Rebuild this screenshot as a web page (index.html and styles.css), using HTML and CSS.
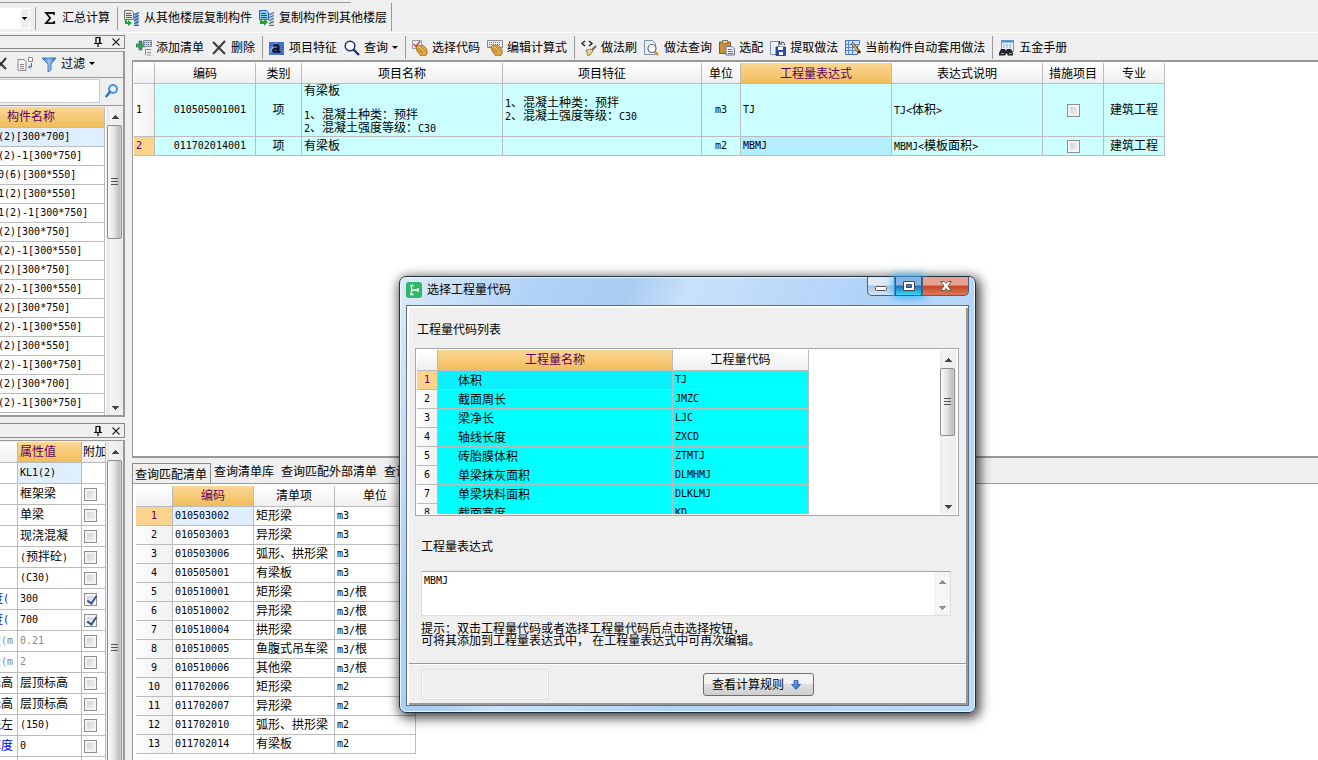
FILE: index.html
```html
<!DOCTYPE html>
<html lang="zh-CN">
<head>
<meta charset="utf-8">
<title>选择工程量代码</title>
<link rel="stylesheet" href="styles.css">
</head>
<body>
<svg class="defs" width="0" height="0" aria-hidden="true">
  <defs>
    <linearGradient id="gFunnel" x1="0" y1="0" x2="1" y2="0"><stop offset="0" stop-color="#2f6fc4"/><stop offset=".5" stop-color="#9cc8f4"/><stop offset="1" stop-color="#2a5fb0"/></linearGradient>
    <linearGradient id="gArrow" x1="0" y1="0" x2="1" y2="1"><stop offset="0" stop-color="#8fc2f7"/><stop offset="1" stop-color="#1d4fae"/></linearGradient>
  </defs>
  <symbol id="i-pin" viewBox="0 0 10 10"><path d="M2.500 .5h5M3 1v5M6.500 1v5M7 1v5M1 6.500h8M5 7v3" fill="none" stroke="#000" stroke-width="1.200"/></symbol>
  <symbol id="i-x" viewBox="0 0 10 10"><path d="M1.500 1.500l7 7M8.500 1.500l-7 7" stroke="#222" stroke-width="1.100"/></symbol>
  <symbol id="i-hand" viewBox="0 0 16 16"><path d="M4 7l2-2 2 1 2-1 3 2 2 3v4l-2 2h-4L5 11z" fill="#e0aa45" stroke="#8a5a16" stroke-width=".8"/><path d="M7 8l4 4M9 7l4 4M6 9.500l4 4" stroke="#a26b1e" stroke-width=".8"/><path d="M7 7l5 4" stroke="#f8dc94" stroke-width=".8"/></symbol>
</svg>

<header class="appbar">
  <div class="appbar-in">
    <select class="combo" aria-label="楼层"><option></option></select>
    <i class="sep"></i>
    <button class="tool"><svg viewBox="0 0 16 16"><path d="M12 5V3H4l4.200 5L4 13.200h8.200V11" fill="none" stroke="#111" stroke-width="1.800"/></svg>汇总计算</button>
    <i class="sep"></i>
    <button class="tool"><svg viewBox="0 0 16 16"><path d="M.5 .5h7l2 2v7h-9z" fill="#e4e4e4" stroke="#777"/><path d="M2 3.500h5M2 5.500h6M2 7.500h6" stroke="#555"/><path d="M10.500 4.500l4-2v13h-4z" fill="#7fa6dc"/><path d="M10 4.500l5-2M10 7.500l5-2M10 10.500l5-2M10 13.500l5-2M10 15.500h5" stroke="#2f5fa8" stroke-width="1.200"/><path d="M1 10v4h3v2l4-3-4-3v2H3v-2z" fill="#22a33a"/></svg>从其他楼层复制构件</button>
    <button class="tool"><svg viewBox="0 0 16 16"><path d="M.5 .5h7l2 2v7h-9z" fill="#8fccf6" stroke="#1a66b5"/><path d="M2 3.500h5M2 5.500h6M2 7.500h6" stroke="#145090"/><path d="M10.500 4.500l4-2v13h-4z" fill="#c3ccd6"/><path d="M10 4.500l5-2M10 7.500l5-2M10 10.500l5-2M10 13.500l5-2M10 15.500h5" stroke="#5b6c80" stroke-width="1.200"/><path d="M1 9v5h4v2l4-4-4-3v2H3V9z" fill="#22a33a"/></svg>复制构件到其他楼层</button>
  </div>
</header>

<main class="work">
  <aside class="side">
    <section class="dock">
      <div class="dock-title"><button aria-label="固定"><svg viewBox="0 0 10 10"><use href="#i-pin"/></svg></button><button aria-label="关闭"><svg viewBox="0 0 10 10"><use href="#i-x"/></svg></button></div>
      <div class="dock-body">
        <div class="side-tools">
          <button class="tool cut" aria-label="删除"><svg viewBox="0 0 16 16"><path d="M3 3l10 10M13 2L3 14" stroke="#333" stroke-width="2"/></svg></button>
          <button class="tool" aria-label="复制"><svg viewBox="0 0 16 16"><path d="M1 3.500h6l2 2v9H1z" fill="#f3f3f3" stroke="#888"/><path d="M3 8.500h4M3 10.500h4M3 12.500h4" stroke="#888"/><path d="M11.500 1.500h4v4h-4z" fill="#fff" stroke="#888"/><path d="M14.500 7v4h-3M13 9.500L11.500 11l1.500 1.500" fill="none" stroke="#3a6fd0"/></svg></button>
          <button class="tool"><svg viewBox="0 0 16 16"><path d="M1 2h14l-5 6v6l-3 2V8z" fill="url(#gFunnel)" stroke="#2a62b4" stroke-width=".8"/></svg>过滤<i class="caret"></i></button>
        </div>
        <div class="search"><input type="text" aria-label="搜索"><button aria-label="查找"><svg viewBox="0 0 16 16"><circle cx="9" cy="6" r="4" fill="#eaf5ff" stroke="#4a90dc" stroke-width="2"/><path d="M6 9L2.500 13" stroke="#2f73c8" stroke-width="2.600" stroke-linecap="round"/></svg></button></div>
        <div class="list-wrap">
          <div class="clip">
          <table class="grid names">
            <thead><tr><th class="hot">构件名称</th></tr></thead>
            <tbody class="m">
              <tr><td class="sel">(2)[300*700]</td></tr>
              <tr><td>(2)-1[300*750]</td></tr>
              <tr><td>0(6)[300*550]</td></tr>
              <tr><td>1(2)[300*550]</td></tr>
              <tr><td>1(2)-1[300*750]</td></tr>
              <tr><td>(2)[300*750]</td></tr>
              <tr><td>(2)-1[300*550]</td></tr>
              <tr><td>(2)[300*750]</td></tr>
              <tr><td>(2)-1[300*550]</td></tr>
              <tr><td>(2)[300*750]</td></tr>
              <tr><td>(2)-1[300*550]</td></tr>
              <tr><td>(2)[300*550]</td></tr>
              <tr><td>(2)-1[300*750]</td></tr>
              <tr><td>(2)[300*700]</td></tr>
              <tr><td>(2)-1[300*750]</td></tr>
              <tr><td></td></tr>
            </tbody>
          </table>
          </div>
          <div class="scroll"><i class="up"></i><b class="thumb thumb-names"></b><i class="down"></i></div>
        </div>
      </div>
    </section>

    <section class="dock">
      <div class="dock-title"><button aria-label="固定"><svg viewBox="0 0 10 10"><use href="#i-pin"/></svg></button><button aria-label="关闭"><svg viewBox="0 0 10 10"><use href="#i-x"/></svg></button></div>
      <div class="dock-body">
        <div class="list-wrap">
          <div class="clip">
          <table class="grid props">
            <colgroup><col class="w18"><col class="w64"><col class="w23"></colgroup>
            <thead><tr><th></th><th class="hot start">属性值</th><th class="start">附加</th></tr></thead>
            <tbody>
              <tr><td></td><td class="sel m">KL1(2)</td><td></td></tr>
              <tr><td></td><td>框架梁</td><td><input type="checkbox" aria-label="框架梁"></td></tr>
              <tr><td></td><td>单梁</td><td><input type="checkbox" aria-label="单梁"></td></tr>
              <tr><td></td><td>现浇混凝</td><td><input type="checkbox" aria-label="现浇混凝"></td></tr>
              <tr><td></td><td><span class="m">(</span>预拌砼<span class="m">)</span></td><td><input type="checkbox" aria-label="预拌砼"></td></tr>
              <tr><td></td><td class="m">(C30)</td><td><input type="checkbox" aria-label="C30"></td></tr>
              <tr><td class="blue"><div class="tail unit">度<span class="m">(</span></div></td><td class="m">300</td><td><input type="checkbox" aria-label="300" checked></td></tr>
              <tr><td class="blue"><div class="tail unit">度<span class="m">(</span></div></td><td class="m">700</td><td><input type="checkbox" aria-label="700" checked></td></tr>
              <tr class="dim"><td><div class="tail">积<span class="m">(m</span></div></td><td class="m">0.21</td><td><input type="checkbox" aria-label="0.21"></td></tr>
              <tr class="dim"><td><div class="tail">长<span class="m">(m</span></div></td><td class="m">2</td><td><input type="checkbox" aria-label="2"></td></tr>
              <tr><td><div class="tail">标高</div></td><td>层顶标高</td><td><input type="checkbox" aria-label="层顶标高"></td></tr>
              <tr><td><div class="tail">标高</div></td><td>层顶标高</td><td><input type="checkbox" aria-label="层顶标高"></td></tr>
              <tr><td><div class="tail">线左</div></td><td class="m">(150)</td><td><input type="checkbox" aria-label="150"></td></tr>
              <tr><td class="blue"><div class="tail">厚度</div></td><td class="m">0</td><td><input type="checkbox" aria-label="0"></td></tr>
              <tr><td></td><td></td><td></td></tr>
            </tbody>
          </table>
          </div>
          <div class="scroll"><i class="up"></i><b class="thumb thumb-props"></b></div>
        </div>
      </div>
    </section>
  </aside>

  <div class="content">
    <section class="pane">
      <div class="toolbar">
        <button class="tool"><svg viewBox="0 0 16 16"><path d="M3 1h3v3h3v3H6v3H3V7H0V4h3z" fill="#3f9a62" stroke="#2b6b44" stroke-width=".6"/><path d="M7.500 .5h8v6h-8z" fill="#cfdcec" stroke="#7d8ba0"/><path d="M8 2.500h7M8 4.500h7" stroke="#50627c" stroke-dasharray="1 1"/><path d="M9 9.500h6M11 12.500h4M11 15h4M9.500 9v6" stroke="#8b8b8b"/></svg>添加清单</button>
        <button class="tool"><svg viewBox="0 0 16 16"><path d="M2 2l12 12M14 1L2 14" stroke="#3a3a3a" stroke-width="2"/></svg>删除</button>
        <i class="sep"></i>
        <button class="tool"><svg viewBox="0 0 16 16"><path d="M0 2h15v13H0z" fill="#4271c9"/><path d="M1 14V9l5-6h3z" fill="#7ba2e8"/><path d="M4.500 6.500c1-2 5-2 5 .5v5M9.500 8.500c-5 0-5.500 1-5.500 2s3 2.500 5.500 0M9 12h2.500" fill="none" stroke="#111" stroke-width="2"/></svg>项目特征</button>
        <button class="tool"><svg viewBox="0 0 16 16"><circle cx="6" cy="6" r="4.800" fill="#fff" stroke="#17307c" stroke-width="1.500"/><path d="M9.500 9.500L15 15" stroke="#17307c" stroke-width="2.400"/></svg>查询<i class="caret"></i></button>
        <i class="sep"></i>
        <button class="tool"><svg viewBox="0 0 16 16"><path d="M.5 .5h9v8h-9z" fill="#e8edf5" stroke="#99a4aa"/><path d="M1.500 4l2.500 2.500L8 1" fill="none" stroke="#d8402a" stroke-width="1.400"/><use href="#i-hand"/></svg>选择代码</button>
        <button class="tool"><svg viewBox="0 0 16 16"><path d="M.5 .5h15v7H.5z" fill="#eceef1" stroke="#888"/><path d="M2 2.500h12M2 4.500h12M2 6.500h8" stroke="#777" stroke-dasharray="1 1"/><use href="#i-hand"/></svg>编辑计算式</button>
        <i class="sep"></i>
        <button class="tool"><svg viewBox="0 0 16 16"><path d="M4 1L1 3.500L4 6M8 1l3 2.500L8 6" fill="none" stroke="#222" stroke-width="1.400"/><path d="M15 6l-5 5" stroke="#666" stroke-width="2"/><path d="M5 10l5-1 2 2-3 4-2 1z" fill="#e6d48c" stroke="#807040" stroke-width=".8"/></svg>做法刷</button>
        <button class="tool"><svg viewBox="0 0 16 16"><path d="M.5 .5h8l3 3v11H.5z" fill="#e9f1fb" stroke="#7890b4"/><circle cx="8" cy="8.500" r="4" fill="#fff" stroke="#666" stroke-width="1.200"/><path d="M10.500 11.500L14 15" stroke="#c98a2b" stroke-width="2.400"/></svg>做法查询</button>
        <button class="tool"><svg viewBox="0 0 16 16"><path d="M.5 2h11v11.500H.5z" fill="#c98f3c" stroke="#8b5c1c"/><path d="M3.500 .5h5v3h-5z" fill="#e7d489" stroke="#777"/><path d="M7 6.500h6l2.500 2.500v6H7z" fill="#eef2f8" stroke="#66789a"/><path d="M9 9.500h4M9 11.500h5M9 13.500h5" stroke="#66789a"/></svg>选配</button>
        <button class="tool"><svg viewBox="0 0 16 16"><path d="M.5 1.500h8v13h-8z" fill="#eef3fb" stroke="#7d90b4"/><path d="M6 7h9.500v8.500H6z" fill="#2d4eb0" stroke="#1d2f72" stroke-width=".8"/><path d="M8 7h5v3H8zM9 12h4v3H9z" fill="#fff"/><path d="M14.500 5c0-3-3-4-4-2M9.500 1v3h3" fill="none" stroke="#333"/></svg>提取做法</button>
        <button class="tool"><svg viewBox="0 0 16 16"><path d="M.5 .5h14v4l-2 1v9H.5z" fill="#d6e4fb" stroke="#4272cc"/><path d="M1 4.500h13M1 7.500h11M1 10.500h11M3.500 1v14M7.500 1v14" stroke="#5a86d8"/><path d="M7 3l8 10" stroke="#38281a" stroke-width="2.800"/><path d="M7 3l6 8" stroke="#f0b64c" stroke-width="1.500"/></svg>当前构件自动套用做法</button>
        <i class="sep"></i>
        <button class="tool"><svg viewBox="0 0 16 16"><path d="M2.500 .5h12v11h-12z" fill="#e3effc" stroke="#6f99cc"/><path d="M2 1.500h13" stroke="#4f8ad6" stroke-width="2"/><path d="M4 5h9M4 7h9" stroke="#8ba9cf" stroke-dasharray="2 1"/><path d="M2 9h4l1 2 1-2h4l2 4v2.500H9L7.500 13 6 15.500H0V13z" fill="#252525"/><path d="M2 13.500h3M10 13.500h3" stroke="#aaa"/></svg>五金手册</button>
      </div>
      <div class="sheet">
        <table class="grid items">
          <colgroup><col class="w21"><col class="w101"><col class="w46"><col class="w201"><col class="w199"><col class="w39"><col class="w151"><col class="w151"><col class="w61"><col class="w61"></colgroup>
          <thead><tr><th></th><th>编码</th><th>类别</th><th>项目名称</th><th>项目特征</th><th>单位</th><th class="hot">工程量表达式</th><th>表达式说明</th><th>措施项目</th><th>专业</th></tr></thead>
          <tbody>
            <tr class="tall"><th class="m start">1</th><td class="m end">010505001001</td><td class="mid">项</td><td>有梁板<br><br><span class="m">1</span>、混凝土种类：预拌<br><span class="m">2</span>、混凝土强度等级：<span class="m">C30</span></td><td><span class="m">1</span>、混凝土种类：预拌<br><span class="m">2</span>、混凝土强度等级：<span class="m">C30</span></td><td class="m mid">m3</td><td class="m">TJ</td><td><span class="m">TJ&lt;</span>体积<span class="m">&gt;</span></td><td class="mid"><input type="checkbox" aria-label="措施项目 1"></td><td class="mid">建筑工程</td></tr>
            <tr><th class="m start on">2</th><td class="m end">011702014001</td><td class="mid">项</td><td>有梁板</td><td></td><td class="m mid">m2</td><td class="m focus">MBMJ</td><td><span class="m">MBMJ&lt;</span>模板面积<span class="m">&gt;</span></td><td class="mid"><input type="checkbox" aria-label="措施项目 2"></td><td class="mid">建筑工程</td></tr>
          </tbody>
        </table>
      </div>
    </section>

    <section class="pane">
      <nav class="tabs"><button class="tab current">查询匹配清单</button><button class="tab">查询清单库</button><button class="tab">查询匹配外部清单</button><button class="tab">查询措施</button></nav>
      <div class="sheet lower">
        <table class="grid match">
          <colgroup><col class="w37"><col class="w81"><col class="w81"><col class="w81"></colgroup>
          <thead><tr><th></th><th class="hot">编码</th><th>清单项</th><th>单位</th></tr></thead>
          <tbody>
            <tr><th class="m on">1</th><td class="m sel">010503002</td><td>矩形梁</td><td class="m">m3</td></tr>
            <tr><th class="m">2</th><td class="m">010503003</td><td>异形梁</td><td class="m">m3</td></tr>
            <tr><th class="m">3</th><td class="m">010503006</td><td>弧形、拱形梁</td><td class="m">m3</td></tr>
            <tr><th class="m">4</th><td class="m">010505001</td><td>有梁板</td><td class="m">m3</td></tr>
            <tr><th class="m">5</th><td class="m">010510001</td><td>矩形梁</td><td><span class="m">m3/</span>根</td></tr>
            <tr><th class="m">6</th><td class="m">010510002</td><td>异形梁</td><td><span class="m">m3/</span>根</td></tr>
            <tr><th class="m">7</th><td class="m">010510004</td><td>拱形梁</td><td><span class="m">m3/</span>根</td></tr>
            <tr><th class="m">8</th><td class="m">010510005</td><td>鱼腹式吊车梁</td><td><span class="m">m3/</span>根</td></tr>
            <tr><th class="m">9</th><td class="m">010510006</td><td>其他梁</td><td><span class="m">m3/</span>根</td></tr>
            <tr><th class="m">10</th><td class="m">011702006</td><td>矩形梁</td><td class="m">m2</td></tr>
            <tr><th class="m">11</th><td class="m">011702007</td><td>异形梁</td><td class="m">m2</td></tr>
            <tr><th class="m">12</th><td class="m">011702010</td><td>弧形、拱形梁</td><td class="m">m2</td></tr>
            <tr><th class="m">13</th><td class="m">011702014</td><td>有梁板</td><td class="m">m2</td></tr>
          </tbody>
        </table>
      </div>
    </section>
  </div>
</main>

<div class="window" role="dialog" aria-labelledby="win-title">
  <div class="win-bar">
    <svg class="logo" viewBox="0 0 16 16"><rect width="16" height="16" rx="3" fill="#2fb765"/><path d="M4 3.500h3.500M5.500 3.500v9M4 12.500h3.500M5.500 8H12M12 6v4" fill="none" stroke="#fff" stroke-width="1.300"/></svg>
    <h1 id="win-title">选择工程量代码</h1>
    <div class="win-btns">
      <button class="wb-min" aria-label="最小化"><svg viewBox="0 0 12 12"><rect x=".5" y="6.500" width="11" height="4" rx="1" fill="#fff" stroke="#555"/></svg></button>
      <button class="wb-max" aria-label="最大化"><svg viewBox="0 0 12 12"><path fill-rule="evenodd" d="M.5 1.500h11v9H.5zM3.500 4.500v3h5v-3z" fill="#fff" stroke="#445"/></svg></button>
      <button class="wb-close" aria-label="关闭"><svg viewBox="0 0 12 12"><path d="M.7 1.500h3.600L6 3.500l1.700-2h3.600L8 6l3.300 4.500H7.700L6 8.500l-1.700 2H.7L4 6z" fill="#fff" stroke="#553" stroke-width=".9"/></svg></button>
    </div>
  </div>
  <div class="client">
    <div class="fields">
      <p class="label">工程量代码列表</p>
      <div class="codes-box">
        <div class="clip">
        <table class="grid codes">
          <colgroup><col class="w21"><col class="w235"><col class="w136"></colgroup>
          <thead><tr><th></th><th class="hot">工程量名称</th><th>工程量代码</th></tr></thead>
          <tbody>
            <tr><th class="m on">1</th><td class="first">体积</td><td class="m">TJ</td></tr>
            <tr><th class="m">2</th><td>截面周长</td><td class="m">JMZC</td></tr>
            <tr><th class="m">3</th><td>梁净长</td><td class="m">LJC</td></tr>
            <tr><th class="m">4</th><td>轴线长度</td><td class="m">ZXCD</td></tr>
            <tr><th class="m">5</th><td>砖胎膜体积</td><td class="m">ZTMTJ</td></tr>
            <tr><th class="m">6</th><td>单梁抹灰面积</td><td class="m">DLMHMJ</td></tr>
            <tr><th class="m">7</th><td>单梁块料面积</td><td class="m">DLKLMJ</td></tr>
            <tr><th class="m">8</th><td>截面宽度</td><td class="m">KD</td></tr>
          </tbody>
        </table>
        </div>
        <div class="scroll"><i class="up"></i><b class="thumb thumb-codes"></b><i class="down"></i></div>
      </div>
      <label class="label expr-label" for="expr">工程量表达式</label>
      <div class="expr-box"><textarea id="expr" class="m">MBMJ</textarea><div class="scroll faint"><i class="up"></i><i class="down"></i></div></div>
      <p class="hint">提示：双击工程量代码或者选择工程量代码后点击选择按钮，<br>可将其添加到工程量表达式中， 在工程量表达式中可再次编辑。</p>
    </div>
    <footer class="actions">
      <button class="blank" disabled aria-label="选择"></button>
      <button class="rules">查看计算规则<svg viewBox="0 0 10 10"><path d="M3 .5h4v4h2.500L5 9.500L.5 4.500H3z" fill="url(#gArrow)" stroke="#2458b4" stroke-width=".8"/></svg></button>
    </footer>
  </div>
</div>
</body>
</html>
```

FILE: styles.css
```css
* { box-sizing: border-box; }
html, body { height: 100%; }
body {
  margin: 0;
  overflow: hidden;
  display: flex;
  flex-direction: column;
  position: relative;
  background: #efefef;
  color: #000;
  font: 12px/12px "Liberation Sans", "Noto Sans CJK SC", sans-serif;
}
button, input, select, textarea { font: inherit; color: inherit; }
button { margin: 0; padding: 0; border: 0; background: none; }
p, h1 { margin: 0; font-size: 12px; font-weight: normal; }
svg { display: block; flex: none; }
.defs { position: absolute; }
.m { font-family: "DejaVu Sans Mono", "Noto Sans CJK SC", monospace; font-size: 10px; }

/* top bar */
.appbar { flex: none; height: 33px; border-bottom: 1px solid #fff; }
.appbar-in {
  display: inline-flex;
  align-items: center;
  gap: 6px;
  height: 31px;
  padding: 5px 4px 0 0;
  background:
    linear-gradient(#999, #999) 0 2px / 351px 1px no-repeat,
    linear-gradient(#999, #999) 100% 3px / 1px 28px no-repeat;
}
.combo {
  width: 30px;
  height: 21px;
  margin-right: -1px;
  border: 1px solid #fff;
  border-left: 0;
  border-radius: 0;
  appearance: none;
  background:
    conic-gradient(from 315deg at 50% 100%, #000 90deg, transparent 0) 22px 8px / 6px 3px no-repeat,
    linear-gradient(#eee, #eee) 21px 0 / 9px 100% no-repeat,
    #fff;
}
.sep { flex: none; width: 1px; height: 23px; background: #999; }
.tool {
  flex: none;
  display: flex;
  align-items: center;
  gap: 4px;
  padding-right: 1px;
  line-height: 16px;
  white-space: nowrap;
}
.tool svg { width: 16px; height: 16px; }
.caret {
  border: 3px solid transparent;
  border-top-color: #000;
  border-bottom: 0;
}
.combo { background:
    linear-gradient(#000, #000) 22px 8px / 5px 1px no-repeat,
    linear-gradient(#000, #000) 23px 9px / 3px 1px no-repeat,
    linear-gradient(#000, #000) 24px 10px / 1px 1px no-repeat,
    linear-gradient(#eee, #eee) 21px 0 / 9px 100% no-repeat,
    #fff; }

/* main areas */
.work {
  flex: 1;
  min-height: 0;
  display: grid;
  grid-template-columns: 124px minmax(0, 1fr);
  gap: 8px;
}
.side, .content { display: grid; min-height: 0; gap: 6px; }
.side { grid-template-rows: minmax(0, 384fr) minmax(0, 337fr); }
.content { grid-template-rows: minmax(0, 425fr) minmax(0, 297fr); gap: 5px; }
.dock, .pane { display: flex; flex-direction: column; min-height: 0; }
.dock { gap: 2px; padding-top: 2px; }
.side .dock + .dock { padding-top: 0; }
.dock-title {
  flex: none;
  display: flex;
  justify-content: flex-end;
  align-items: center;
  gap: 8px;
  height: 14px;
  padding-right: 3px;
  border: 1px solid #888;
  border-left: 0;
}
.dock + .dock .dock-title { height: 15px; }
.dock-title svg { width: 10px; height: 10px; }
.dock-body {
  flex: 1;
  min-height: 0;
  display: flex;
  flex-direction: column;
  border: solid #999;
  border-width: 1px 2px 2px 0;
}
.side .dock + .dock .dock-body { border-bottom: 0; }
.side-tools {
  flex: none;
  display: flex;
  align-items: center;
  gap: 7px;
  height: 26px;
  padding-bottom: 2px;
  border-bottom: 1px solid #999;
}
.side-tools .cut { margin-left: -7px; }
.search {
  flex: none;
  display: flex;
  align-items: center;
  gap: 4px;
  height: 28px;
  padding-bottom: 2px;
  border-bottom: 1px solid #999;
}
.search input {
  width: 100px;
  height: 24px;
  border: 1px solid #ccc;
  border-left: 0;
  background: #fff;
}
.search svg { width: 16px; height: 16px; }
.list-wrap { flex: 1; min-height: 0; display: flex; gap: 1px; padding-top: 1px; }
.clip { flex: 1; min-width: 0; overflow: hidden; background: #fff; }

/* tables */
.grid { table-layout: fixed; border-collapse: separate; border-spacing: 0; width: 1px; }
.grid th, .grid td {
  height: 19px;
  padding: 0 2px;
  border: solid #bbb;
  border-width: 0 1px 1px 0;
  white-space: nowrap;
  overflow: hidden;
  font-weight: normal;
  text-align: left;
  vertical-align: middle;
  background: #fff;
}
.grid thead th {
  height: 21px;
  text-align: center;
  background: linear-gradient(#fff, #efefef);
}
.grid tbody th { text-align: center; background: linear-gradient(90deg, #fcfcfc, #f1f1f1); }
.grid thead .hot { background: linear-gradient(#fbd795, #f0bd59); color: #5c0060; }
.grid tbody .on { background: #fbd38c; color: #5c0060; }
.grid .sel { background: #e0efff; }
.grid .start { text-align: left; }
.grid .mid { text-align: center; }
.grid .end { text-align: right; padding-right: 9px; }
.w18 { width: 18px; } .w21 { width: 21px; } .w23 { width: 24px; } .w37 { width: 37px; }
.w39 { width: 39px; } .w46 { width: 46px; } .w61 { width: 61px; } .w64 { width: 64px; }
.w81 { width: 81px; } .w101 { width: 101px; } .w136 { width: 136px; } .w151 { width: 151px; }
.w199 { width: 199px; } .w201 { width: 201px; } .w235 { width: 235px; }

.names { width: 105px; }
.names th { padding-right: 44px; }
.names td { text-indent: -4px; }
.props { width: 106px; }
.props td { height: 21px; }
.props td:first-child { padding: 0 4px 0 0; }
.props thead .start:last-child { padding-left: 1px; }
.tail { display: flex; justify-content: flex-end; }
.unit { padding-right: 4px; }
.blue { color: #00f; }
.dim { color: #888; }
.items thead th { padding-top: 2px; }
.items td { background: #cff; }
.items .tall td { height: 53px; }
.items .focus { background: #b5eeff; }
.codes td { background: #0ff; }
.codes td:nth-child(2) { padding: 2px 0 0 20px; }
.codes .first { background: #0af0ff; }

input[type="checkbox"] {
  display: block;
  appearance: none;
  width: 13px;
  height: 13px;
  margin: 0;
  border: 1px solid #8e8f8f;
  background: linear-gradient(135deg, #ccc, #f6f6f6);
  box-shadow: inset 0 0 0 2px #f4f4f4;
}
.items input { margin: 0 auto; }
input[type="checkbox"]:checked::after {
  content: "";
  display: block;
  width: 4px;
  height: 8px;
  margin: 0 0 0 4px;
  border: solid #2b55a0;
  border-width: 0 2px 2px 0;
  transform: rotate(35deg);
}

/* scroll bars */
.scroll {
  flex: none;
  display: flex;
  flex-direction: column;
  width: 16px;
  overflow: hidden;
  background: linear-gradient(90deg, #e6e6e6, #f2f2f2 20%, #ececec);
}
.up, .down {
  flex: none;
  height: 18px;
  background: conic-gradient(from 135deg at 50% 0, #444 90deg, transparent 0) 5px 8px / 7px 4px no-repeat;
}
.down {
  margin-top: auto;
  background: conic-gradient(from 315deg at 50% 100%, #444 90deg, transparent 0) 5px 9px / 7px 4px no-repeat;
}
.faint { opacity: .6; }
.thumb {
  flex: none;
  margin-right: 1px;
  border: 1px solid #8c8c8c;
  border-radius: 2px;
  background:
    repeating-linear-gradient(#555 0 1px, transparent 1px 3px) center / 7px 9px no-repeat,
    linear-gradient(90deg, #fafafa, #e4e4e4 45%, #bdbdbd 90%, #ddd);
}
.thumb-names { height: 114px; }
.thumb-props { height: 376px; }
.thumb-codes { height: 68px; }

/* right-hand panes */
.toolbar {
  flex: none;
  display: flex;
  align-items: center;
  gap: 6px;
  height: 27px;
  padding: 2px 0 0 4px;
}
.sheet {
  flex: 1;
  min-height: 0;
  overflow: hidden;
  padding: 1px;
  border: solid #999;
  border-width: 2px 0 2px 1px;
  background: #fff;
}
.lower { border-width: 1px 0 0 1px; padding: 2px 3px; }
.tabs { flex: none; display: flex; height: 20px; gap: 7px; }
.tab { height: 19px; line-height: 16px; padding-bottom: 2px; white-space: nowrap; }
.tab.current {
  height: 20px;
  padding: 3px 3px 0 2px;
  margin-right: -4px;
  border: 1px solid #888;
  border-bottom: 0;
}

/* dialog window */
.window {
  position: absolute;
  left: 399px;
  top: 276px;
  width: 577px;
  padding: 0 6px 6px;
  border: 1px solid #22303c;
  border-radius: 7px;
  background: linear-gradient(115deg, #dcebf8, #b0d2f7 18%, #a9ccf2 30%, #c9e1fa 38%, #b2d3f8 60%, #badafa);
  box-shadow: inset 0 0 0 1px #eaf6ff, 2px 3px 12px 2px rgba(0, 0, 0, .75);
}
.win-bar { display: flex; align-items: center; gap: 5px; height: 28px; padding-bottom: 2px; }
.logo { width: 16px; height: 16px; }
.win-bar h1 { flex: 1; line-height: 16px; }
.win-btns { display: flex; align-self: flex-start; height: 19px; }
.win-btns button {
  display: grid;
  place-items: center;
  border: 1px solid #4d6178;
  border-top: 0;
}
.win-btns svg { width: 12px; height: 12px; }
.wb-min { width: 28px; border-radius: 0 0 0 5px; background: linear-gradient(#dfeaf5 45%, #a9c4df 50%, #d3e6f8); }
.win-btns .wb-max { width: 27px; border-color: #2659a0; background: linear-gradient(#86b5e4 45%, #2468b4 50%, #2ce0ff); box-shadow: 0 0 8px 2px #3cb4ff; }
.wb-close { width: 47px; border-radius: 0 0 5px 0; background: linear-gradient(#e6a193 45%, #c5432a 50%, #dc7a58); }
.client {
  border: 1px solid #5c7186;
  background: #efefef;
  box-shadow: inset 1px 1px 0 1px #fff, inset -2px -2px 0 #999;
}
.fields { padding: 18px 9px 16px 8px; }
.label { display: block; line-height: 12px; margin-left: 2px; }
.codes-box {
  display: flex;
  height: 168px;
  margin-top: 12px;
  padding: 1px 2px 1px 1px;
  border: 1px solid #a6a6a6;
  background: #fff;
}
.expr-label { margin: 25px 0 0 6px; }
.expr-box {
  display: flex;
  height: 45px;
  margin: 18px 8px 0 6px;
  border: 1px solid #ddd;
  border-top-color: #a6a6a6;
  background: #fff;
}
.expr-box textarea {
  flex: 1;
  padding: 3px 2px;
  border: 0;
  outline: 0;
  resize: none;
  background: #fff;
}
.hint { margin: 7px 0 0 6px; }
.actions {
  display: flex;
  align-items: center;
  gap: 154px;
  height: 42px;
  margin: 0 2px;
  padding: 0 12px 0 12px;
  border-top: 1px solid #999;
  box-shadow: inset 0 1px #fff;
}
.blank { width: 128px; height: 31px; border: 1px solid #ddd; border-radius: 3px; box-shadow: inset 0 0 0 1px #f8f8f8; }
.rules {
  display: flex;
  align-items: center;
  gap: 7px;
  height: 23px;
  padding: 0 12px 0 8px;
  border: 1px solid #6f6f6f;
  border-radius: 3px;
  background: linear-gradient(#f3f3f3 45%, #dedede 50%, #cfcfcf);
}
.rules svg { width: 10px; height: 10px; }
```
